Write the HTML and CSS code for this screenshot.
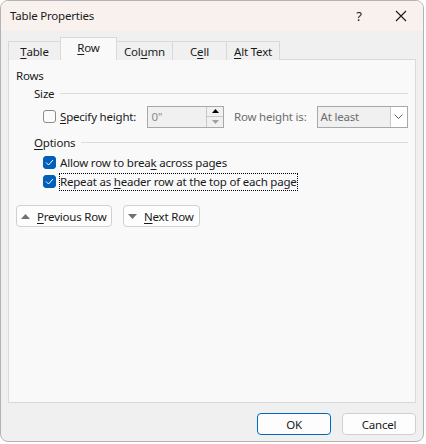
FILE: index.html
```html
<!DOCTYPE html>
<html>
<head>
<meta charset="utf-8">
<link rel="stylesheet" href="styles.css">
</head>
<body>
<div class="window">
  <div class="titlebar">
    <span class="title">Table Properties</span>
    <span class="help">?</span>
    <span class="close"><svg width="12" height="12" viewBox="0 0 12 12"><path d="M1 1L11 11M11 1L1 11" stroke="#1a1a1a" stroke-width="1.1" fill="none"/></svg></span>
  </div>
  <div class="content">
    <div class="tabs">
      <div class="tab t1"><u>T</u>able</div>
      <div class="tab t2 active"><u>R</u>ow</div>
      <div class="tab t3">Col<u>u</u>mn</div>
      <div class="tab t4">C<u>e</u>ll</div>
      <div class="tab t5"><u>A</u>lt Text</div>
    </div>
    <div class="panel">
      <div class="group-title">Rows</div>
      <div class="section">
        <div class="sec-head"><span>Size</span><div class="rule"></div></div>
        <div class="size-row">
          <span class="cb"></span>
          <span class="lbl"><u>S</u>pecify height:</span>
          <div class="spin">
            <span class="spin-val">0"</span>
            <div class="spin-btns">
              <div class="sb up"><svg width="7" height="4" viewBox="0 0 7 4"><path d="M0 4L3.5 0L7 4Z" fill="#000"/></svg></div>
              <div class="sb down"><svg width="7" height="4" viewBox="0 0 7 4"><path d="M0 0L3.5 4L7 0Z" fill="#a0a0a0"/></svg></div>
            </div>
          </div>
          <span class="lbl2">Row height is:</span>
          <div class="combo">
            <span class="combo-val">At least</span>
            <div class="combo-btn"><svg width="9" height="5" viewBox="0 0 9 5"><path d="M0.5 0.5L4.5 4.5L8.5 0.5" stroke="#606060" stroke-width="1" fill="none"/></svg></div>
          </div>
        </div>
      </div>
      <div class="section">
        <div class="sec-head opts-head"><span><u>O</u>ptions</span><div class="rule"></div></div>
        <div class="opt"><span class="cb checked"><svg width="9" height="7" viewBox="0 0 9 7"><path d="M1 3.5L3.5 6L8 1" stroke="#fff" stroke-width="1" fill="none"/></svg></span><span>Allow row to brea<u>k</u> across pages</span></div>
        <div class="opt"><span class="cb checked"><svg width="9" height="7" viewBox="0 0 9 7"><path d="M1 3.5L3.5 6L8 1" stroke="#fff" stroke-width="1" fill="none"/></svg></span><span class="focus">Repeat as <u>h</u>eader row at the top of each page</span></div>
      </div>
      <div class="nav">
        <div class="btn navbtn prev"><svg width="9" height="5" viewBox="0 0 9 5"><path d="M0 5L4.5 0L9 5Z" fill="#707070"/></svg><span><u>P</u>revious Row</span></div>
        <div class="btn navbtn next"><svg width="9" height="5" viewBox="0 0 9 5"><path d="M0 0L4.5 5L9 0Z" fill="#707070"/></svg><span><u>N</u>ext Row</span></div>
      </div>
    </div>
    <div class="footer">
      <div class="btn ok">OK</div>
      <div class="btn">Cancel</div>
    </div>
  </div>
</div>
</body>
</html>
```
FILE: styles.css
```css
html, body {
  margin: 0;
  padding: 0;
  background: #ffffff;
}
body {
  font-family: "Noto Sans", "Open Sans", sans-serif;
  font-size: 11.5px;
  letter-spacing: -0.2px;
  color: #1a1a1a;
}
u { text-decoration: underline; text-underline-offset: 2px; }
.window {
  width: 424px;
  height: 442px;
  box-sizing: border-box;
  border: 1px solid #b4b4b4;
  border-radius: 8px;
  background: #f0f0f0;
  overflow: hidden;
  display: flex;
  flex-direction: column;
}
.titlebar {
  height: 30px;
  background: #f9f1ee;
  display: flex;
  align-items: center;
  flex-shrink: 0;
}
.title {
  margin-left: 9px;
  margin-top: -1px;
  flex: 1;
  color: #1a1a1a;
}
.help {
  width: 20px;
  text-align: center;
  font-size: 13px;
  margin-right: 26px;
}
.close {
  width: 12px;
  height: 12px;
  margin-right: 16px;
  display: flex;
}
.content {
  flex: 1;
  display: flex;
  flex-direction: column;
  padding: 7px 7px 7px 7px;
}
.tabs {
  display: flex;
  align-items: flex-end;
  height: 22px;
  margin-bottom: -1px;
  position: relative;
  z-index: 1;
}
.tab {
  height: 19px;
  box-sizing: border-box;
  border: 1px solid #d9d9d9;
  border-bottom: none;
  background: #f0f0f0;
  display: flex;
  align-items: center;
  justify-content: center;
  margin-left: -1px;
}
.t1 { width: 53px; margin-left: 0; }
.t2 { width: 57px; }
.t3 { width: 57px; }
.t4 { width: 55px; }
.t5 { width: 54px; }
.tab.active {
  height: 23px;
  background: #f9f9f9;
  align-items: flex-start;
  padding-top: 2px;
  z-index: 2;
}
.panel {
  height: 344px;
  box-sizing: border-box;
  border: 1px solid #d9d9d9;
  background: #f9f9f9;
  padding: 8px 7px 0 7px;
  display: flex;
  flex-direction: column;
}
.group-title {
  height: 16px;
  line-height: 16px;
}
.section {
  margin-left: 18px;
}
.sec-head {
  display: flex;
  align-items: center;
  height: 18px;
}
.opts-head {
  margin-bottom: 2px;
}
.rule {
  flex: 1;
  height: 1px;
  background: #dcdcdc;
  margin-left: 6px;
}
.size-row {
  display: flex;
  align-items: center;
  height: 23px;
  margin-top: 3px;
  margin-bottom: 5px;
  padding-left: 9px;
}
.cb {
  width: 13px;
  height: 13px;
  box-sizing: border-box;
  border: 1px solid #8a8a8a;
  border-radius: 3px;
  background: #fbfbfb;
  display: flex;
  align-items: center;
  justify-content: center;
  flex-shrink: 0;
}
.cb.checked {
  background: #005fb8;
  border-color: #005fb8;
}
.lbl {
  margin-left: 4px;
  width: 88px;
}
.spin {
  width: 77px;
  height: 22px;
  box-sizing: border-box;
  border: 1px solid #a8a8a8;
  background: #f0f0f0;
  display: flex;
}
.spin-val {
  flex: 1;
  color: #8c8c8c;
  padding-left: 3px;
  line-height: 19px;
}
.spin-btns {
  width: 16px;
  display: flex;
  flex-direction: column;
  border-left: 1px solid #c8c8c8;
}
.sb {
  flex: 1;
  display: flex;
  align-items: center;
  justify-content: center;
}
.sb.up { border-bottom: 1px solid #c8c8c8; }
.lbl2 {
  margin-left: 10px;
  width: 83px;
  color: #6d6d6d;
}
.combo {
  width: 92px;
  height: 22px;
  box-sizing: border-box;
  border: 1px solid #a8a8a8;
  background: #f0f0f0;
  display: flex;
}
.combo-val {
  flex: 1;
  color: #6d6d6d;
  padding-left: 3px;
  line-height: 19px;
}
.combo-btn {
  width: 16px;
  background: #ffffff;
  border-left: 1px solid #c8c8c8;
  display: flex;
  align-items: center;
  justify-content: center;
}
.opt {
  display: flex;
  align-items: center;
  height: 19px;
  padding-left: 9px;
}
.opt .cb { margin-right: 4px; }
.focus {
  outline: 1px dotted #000;
  outline-offset: 0px;
  line-height: 16px;
}
.nav {
  display: flex;
  gap: 11px;
  margin-top: 14px;
}
.btn {
  height: 22px;
  box-sizing: border-box;
  border: 1px solid #d0d0d0;
  border-radius: 4px;
  background: #fdfdfd;
  display: flex;
  align-items: center;
  justify-content: center;
  width: 74px;
}
.navbtn {
  justify-content: flex-start;
  padding-left: 4px;
  gap: 7px;
}
.navbtn.prev { width: 96px; }
.navbtn.next { width: 77px; }
.footer {
  display: flex;
  justify-content: flex-end;
  gap: 11px;
  margin-top: 10px;
}
.btn.ok {
  border-color: #0067c0;
}
```
